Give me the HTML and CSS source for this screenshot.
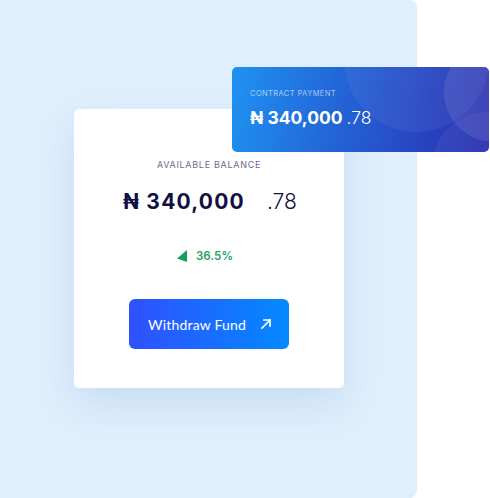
FILE: index.html
```html
<!DOCTYPE html>
<html lang="en">
<head>
<meta charset="utf-8">
<title>Balance</title>
<link rel="stylesheet" href="styles.css">
</head>
<body>
<div class="stage">
  <div class="panel">
    <div class="card">
      <div class="label">AVAILABLE BALANCE</div>
      <div class="amount">
        <span class="whole">₦ 340,000</span>
        <span class="cents">.78</span>
      </div>
      <div class="change">
        <svg class="tri" width="10" height="12" viewBox="0 0 10 12"><polygon points="10,0 0,8.5 10,12" fill="#14a05a"/></svg>
        <span class="pct">36.5%</span>
      </div>
      <button class="btn">
        <span class="btn-text">Withdraw Fund</span>
        <svg width="12" height="12" viewBox="0 0 12 12" fill="none" stroke="#fff" stroke-width="1.7" stroke-linecap="square"><path d="M2 10 L10 2 M4 2 H10 V8"/></svg>
      </button>
    </div>
  </div>
  <div class="pay">
    <div class="circle c1"></div>
    <div class="circle c2"></div>
    <div class="circle c3"></div>
    <div class="pay-label">CONTRACT PAYMENT</div>
    <div class="pay-amount"><span class="pay-whole">₦ 340,000</span><span class="pay-cents">.78</span></div>
  </div>
</div>
</body>
</html>
```

FILE: styles.css
```css
* { box-sizing: border-box; }
html, body { margin: 0; padding: 0; background: #ffffff; }
body { font-family: Lato, "Open Sans", sans-serif; overflow: hidden; }

.stage {
  position: relative;
  width: 490px;
  height: 498px;
  overflow: hidden;
}

.panel {
  width: 417px;
  height: 498px;
  background: #dfeffd;
  border-radius: 0 8px 8px 0;
  padding: 109px 0 0 74px;
}

.card {
  width: 270px;
  height: 279px;
  background: #ffffff;
  border-radius: 5px;
  box-shadow: 0 16px 40px rgba(50, 100, 170, 0.13);
  display: flex;
  flex-direction: column;
  align-items: center;
  padding-top: 50px;
}

.label {
  font-family: Inter, sans-serif;
  font-size: 9px;
  letter-spacing: 0.7px;
  color: #6b6a8e;
  line-height: 12px;
}

.amount {
  margin-top: 16px;
  display: flex;
  align-items: baseline;
  gap: 22px;
  color: #120f45;
  line-height: 30px;
  margin-left: 2px;
}
.whole {
  font-family: Inter, sans-serif;
  font-weight: 700;
  font-size: 21px;
  letter-spacing: 1.2px;
}
.cents {
  font-family: Inter, sans-serif;
  font-weight: 300;
  font-size: 21px;
}

.change {
  margin-top: 32px;
  display: flex;
  align-items: center;
  gap: 9px;
  margin-right: 8px;
}
.tri { display: block; }
.pct {
  font-family: Inter, sans-serif;
  font-weight: 600;
  font-size: 11.5px;
  color: #1aa35c;
  letter-spacing: 0.1px;
}

.btn {
  margin-top: 36px;
  width: 160px;
  height: 50px;
  border: 0;
  border-radius: 6px;
  background: linear-gradient(90deg, #3050ff 0%, #1670ff 55%, #0589ff 100%);
  color: #ffffff;
  display: flex;
  align-items: center;
  padding: 0 18px 0 19px;
  gap: 14px;
  font-family: Lato, sans-serif;
  font-size: 14px;
  letter-spacing: 0.2px;
  white-space: nowrap;
}
.btn-text { flex: none; }
.btn svg { display: block; flex: none; }

.pay {
  position: absolute;
  left: 232px;
  top: 67px;
  width: 257px;
  height: 85px;
  border-radius: 5px;
  overflow: hidden;
  background: linear-gradient(100deg, #1f92f2 0%, #2366d8 40%, #2844c0 75%, #2c2fb0 100%);
  padding: 22px 0 0 18px;
  color: #ffffff;
}
.circle {
  position: absolute;
  border-radius: 50%;
  background: rgba(255, 255, 255, 0.05);
}
.c1 { left: 112px; top: -80px; width: 145px; height: 145px; }
.c2 { left: 212px; top: -25px; width: 100px; height: 100px; background: rgba(255,255,255,0.09); }
.c3 { left: 200px; top: 45px; width: 110px; height: 110px; background: rgba(255,255,255,0.05); }

.pay-label {
  position: relative;
  font-family: Inter, sans-serif;
  font-size: 7.5px;
  letter-spacing: 0.4px;
  color: rgba(255, 255, 255, 0.62);
  line-height: 10px;
}
.pay-amount {
  position: relative;
  margin-top: 8px;
  line-height: 22px;
  display: flex;
  align-items: baseline;
  gap: 4px;
}
.pay-whole {
  font-family: Inter, sans-serif;
  font-weight: 700;
  font-size: 17.5px;
}
.pay-cents {
  font-family: Inter, sans-serif;
  font-weight: 300;
  font-size: 17.5px;
}
```
